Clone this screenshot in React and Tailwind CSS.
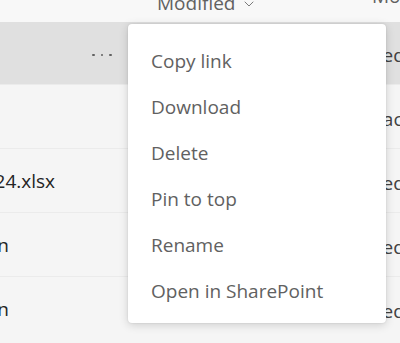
import React from "react";
import { ChevronDown } from "lucide-react";

const rows = [
  { id: 1, name: "Quarterly Review", clip: "w-0", modified: "2 hours ago", by: "Ted Miller", selected: true },
  { id: 2, name: "Notes", clip: "w-0", modified: "Yesterday", by: "Zach Evans" },
  { id: 3, name: "Budget 2024.xlsx", clip: "w-[55px]", modified: "March 4", by: "Ted Miller" },
  { id: 4, name: "Marketing plan", clip: "w-[9px]", modified: "March 1", by: "Ted Miller" },
  { id: 5, name: "Onboarding plan", clip: "w-[9px]", modified: "February 27", by: "Ted Miller" },
];

const menuItems = ["Copy link", "Download", "Delete", "Pin to top", "Rename", "Open in SharePoint"];

function MoreIcon() {
  return (
    <div className="flex items-center gap-[6px]">
      <span className="w-[2.5px] h-[2.5px] rounded-full bg-[#616161]" />
      <span className="w-[2.5px] h-[2.5px] rounded-full bg-[#616161]" />
      <span className="w-[2.5px] h-[2.5px] rounded-full bg-[#616161]" />
    </div>
  );
}

export default function App() {
  return (
    <div
      className="relative w-[400px] h-[343px] overflow-hidden bg-[#f5f5f5] text-[19px] leading-6 text-[#242424]"
      style={{ fontFamily: '"Open Sans", "Noto Sans", sans-serif' }}
    >
      {/* header */}
      <div className="grid grid-cols-[157px_215px_1fr] h-[22px] overflow-hidden bg-[#f8f8f8] text-[#616161]">
        <div />
        <div className="-mt-[17px] flex items-center gap-[6px] whitespace-nowrap">
          Modified
          <ChevronDown size={16} strokeWidth={1.25} className="mt-[3px]" />
        </div>
        <div className="-mt-[16px] whitespace-nowrap">Modified By</div>
      </div>

      {/* rows */}
      {rows.map((row) => (
        <div
          key={row.id}
          className={
            row.selected
              ? "grid grid-cols-[157px_215px_1fr] h-[62px] items-center bg-[#e0e0e0]"
              : "grid grid-cols-[157px_215px_1fr] h-[64px] items-center border-t border-[#ebebeb]"
          }
        >
          <div className="flex items-center">
            <div className={`${row.clip} flex justify-end overflow-hidden whitespace-nowrap`}>
              <span>{row.name}</span>
            </div>
            {row.selected && (
              <div className="ml-[92px] mt-[4px]">
                <MoreIcon />
              </div>
            )}
          </div>
          <div className="whitespace-nowrap text-[#424242]">{row.modified}</div>
          <div className="whitespace-nowrap overflow-hidden text-[#424242] mt-[4px]">{row.by}</div>
        </div>
      ))}

      {/* context menu */}
      <div className="absolute left-[128px] top-[24px] w-[258px] rounded-[4px] bg-white pt-[14px] pb-[9px] shadow-[0_2px_10px_rgba(0,0,0,0.16),0_0_2px_rgba(0,0,0,0.12)]">
        {menuItems.map((item) => (
          <div key={item} className="h-[46px] flex items-center pl-[23px] text-[#616161] whitespace-nowrap">
            {item}
          </div>
        ))}
      </div>
    </div>
  );
}
